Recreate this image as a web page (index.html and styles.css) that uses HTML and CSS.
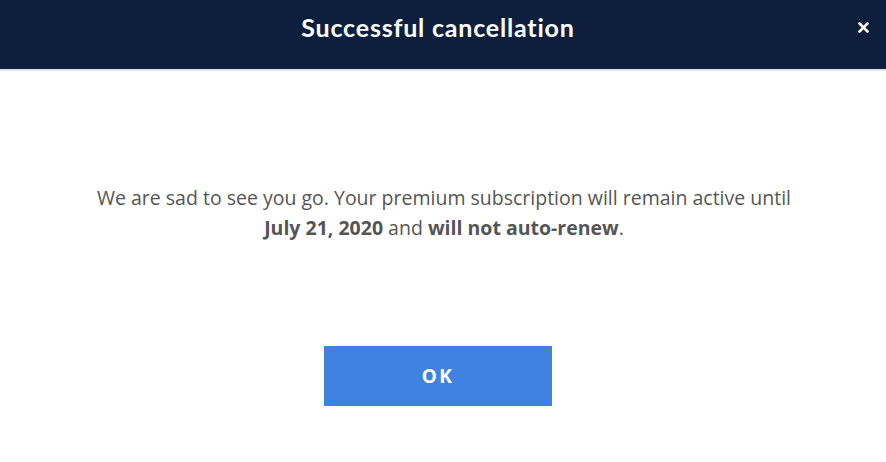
FILE: index.html
```html
<!DOCTYPE html>
<html lang="en">
<head>
    <meta charset="UTF-8">
    <title>Successful cancellation</title>
    <link rel="stylesheet" href="styles.css">
</head>
<body>
    <div class="modal">
        <div class="modal-header">
            <h1>Successful cancellation</h1>
            <button class="close" aria-label="Close">
                <svg width="11" height="11" viewBox="0 0 11 11">
                    <path d="M1.5 1.5 L9.5 9.5 M9.5 1.5 L1.5 9.5" stroke="#fff" stroke-width="2.6" stroke-linecap="square"/>
                </svg>
            </button>
        </div>
        <div class="modal-body">
            <p>We are sad to see you go. Your premium subscription will remain active until <strong>July 21, 2020</strong> and <strong>will not auto-renew</strong>.</p>
            <button class="ok">OK</button>
        </div>
    </div>
</body>
</html>
```

FILE: styles.css
```css
body {
    margin: 0;
    background-color: #fff;
    font-family: "Open Sans", Arial, sans-serif;
}
.modal {
    width: 886px;
    height: 462px;
}
.modal-header {
    position: relative;
    height: 71px;
    background-color: #0e1f3e;
    border-bottom: 2px solid #e4e4e4;
    display: flex;
    justify-content: center;
    align-items: flex-start;
    box-sizing: border-box;
    padding-top: 12px;
}
.modal-header h1 {
    margin: 0 10px 0 0;
    color: #fff;
    font-family: Lato, "Open Sans", sans-serif;
    font-size: 25px;
    line-height: 30px;
    font-weight: 700;
    letter-spacing: 0.8px;
}
.close {
    position: absolute;
    right: 17px;
    top: 21px;
    background: none;
    border: none;
    padding: 0;
    cursor: pointer;
}
.modal-body {
    display: flex;
    flex-direction: column;
    align-items: center;
    padding-top: 112px;
}
.modal-body p {
    margin: 0 0 0 2px;
    width: 710px;
    text-align: center;
    color: #555;
    font-size: 19.5px;
    line-height: 30px;
}
.modal-body strong {
    font-weight: 700;
}
.ok {
    margin: 103px 10px 0 0;
    width: 228px;
    height: 60px;
    background-color: #4182e1;
    color: #fff;
    border: none;
    font-family: "Open Sans", Arial, sans-serif;
    font-size: 19px;
    font-weight: 700;
    letter-spacing: 2.5px;
    cursor: pointer;
}
```
